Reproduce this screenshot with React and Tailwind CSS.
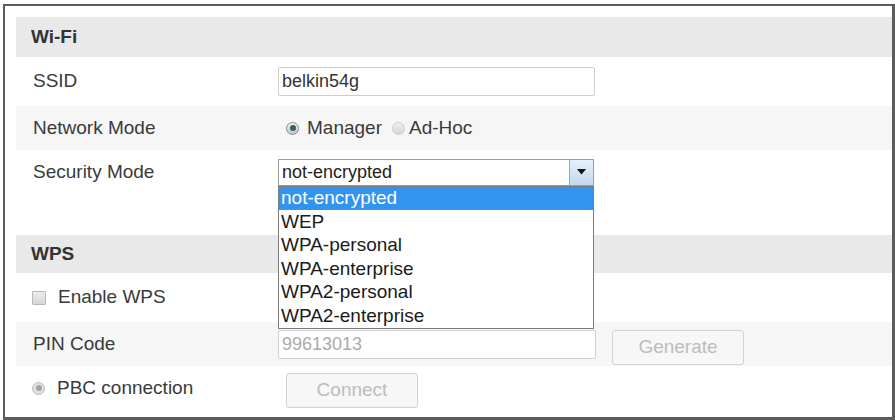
import React from "react";

const options = [
  "not-encrypted",
  "WEP",
  "WPA-personal",
  "WPA-enterprise",
  "WPA2-personal",
  "WPA2-enterprise",
];

const Radio = ({ checked, disabled }) => (
  <span
    className={`shrink-0 flex items-center justify-center w-[13px] h-[13px] rounded-full border ${
      disabled
        ? "border-[#bdbdbd] bg-[#e0e0e0]"
        : checked
        ? "border-[#8c8c8c] bg-gradient-to-b from-[#f2f2f2] to-[#c4c4c4]"
        : "border-[#cccccc] bg-gradient-to-b from-[#eeeeee] to-[#d8d8d8]"
    }`}
  >
    {checked && (
      <span
        className={`w-[6px] h-[6px] rounded-full ${
          disabled ? "bg-[#a4a4a4]" : "bg-[#2d5f70]"
        }`}
      />
    )}
  </span>
);

const SectionHeader = ({ title, height }) => (
  <div className={`${height} flex items-center bg-[#e9e9e9] pl-[15px]`}>
    <span className="font-bold text-[19px] text-[#333]">{title}</span>
  </div>
);

const Row = ({ label, shaded, height = "h-[44px]", children }) => (
  <div className={`${height} flex items-center ${shaded ? "bg-[#f6f6f6]" : ""}`}>
    <div className="w-[262px] shrink-0 pl-[17px] text-[19px] text-[#3a3a3a]">
      {label}
    </div>
    <div className="flex items-center">{children}</div>
  </div>
);

export default function App() {
  return (
    <div className="w-[895px] h-[420px] bg-white pl-[3px] pt-[4px] font-['Liberation_Sans',Arial,sans-serif]">
      <div className="w-[892px] h-[416px] border-l-2 border-t-2 border-r-[3px] border-b-[3px] border-[#5c5c5c] pl-[11px] pt-[11px]">
        {/* Wi-Fi section */}
        <SectionHeader title="Wi-Fi" height="h-[40px]" />

        <Row label="SSID" height="h-[49px]">
          <div className="w-[317px] h-[29px] border border-[#cfcfcf] rounded-[2px] bg-white flex items-center pl-[3px] text-[18px] text-[#333]">
            belkin54g
          </div>
        </Row>

        <Row label="Network Mode" shaded>
          <div className="flex items-center ml-[8px] text-[19px] text-[#3a3a3a]">
            <Radio checked />
            <span className="ml-[8px]">Manager</span>
            <span className="ml-[10px] flex">
              <Radio />
            </span>
            <span className="ml-[4px]">Ad-Hoc</span>
          </div>
        </Row>

        <Row label="Security Mode">
          <div className="relative">
            <div className="w-[316px] h-[27px] border border-[#9c9c9c] bg-white flex items-center">
              <span className="flex-1 pl-[3px] text-[18px] text-[#222]">
                not-encrypted
              </span>
              <span className="w-[24px] h-full border-l border-[#8fa9c4] bg-gradient-to-b from-[#e6f0fa] to-[#c3d9ee] flex items-center justify-center">
                <svg width="9" height="6" viewBox="0 0 9 6">
                  <path d="M0 0 L9 0 L4.5 5.5 Z" fill="#111" />
                </svg>
              </span>
            </div>
            <div className="absolute left-0 top-[27px] w-[316px] border border-[#7c7c7c] bg-white z-10">
              {options.map((opt, i) => (
                <div
                  key={opt}
                  className={`h-[23.5px] flex items-center pl-[2px] text-[19px] ${
                    i === 0 ? "bg-[#3394f0] text-white" : "text-[#1a1a1a]"
                  }`}
                >
                  {opt}
                </div>
              ))}
            </div>
          </div>
        </Row>

        <div className="h-[41px]" />

        {/* WPS section */}
        <SectionHeader title="WPS" height="h-[38px]" />

        <div className="h-[49px] flex items-center pl-[16px] text-[19px] text-[#3a3a3a]">
          <span className="shrink-0 w-[14px] h-[14px] border border-[#b8b8b8] bg-gradient-to-b from-[#ececec] to-[#d6d6d6] rounded-[1px]" />
          <span className="ml-[12px]">Enable WPS</span>
        </div>

        <Row label="PIN Code" shaded>
          <div className="w-[318px] h-[29px] border border-[#cfcfcf] rounded-[2px] bg-white flex items-center pl-[3px] text-[18px] text-[#ababab]">
            99613013
          </div>
          <button className="ml-[16px] mt-[6px] w-[132px] h-[35px] border border-[#d2d2d2] rounded-[3px] bg-[#f7f7f7] text-[19px] text-[#bcbcbc]">
            Generate
          </button>
        </Row>

        <div className="h-[44px] flex items-center">
          <div className="w-[262px] shrink-0 pl-[16px] flex items-center text-[19px] text-[#3a3a3a]">
            <Radio checked disabled />
            <span className="ml-[12px]">PBC connection</span>
          </div>
          <button className="ml-[8px] mt-[4px] w-[132px] h-[35px] border border-[#d2d2d2] rounded-[3px] bg-[#f7f7f7] text-[19px] text-[#bcbcbc]">
            Connect
          </button>
        </div>
      </div>
    </div>
  );
}
